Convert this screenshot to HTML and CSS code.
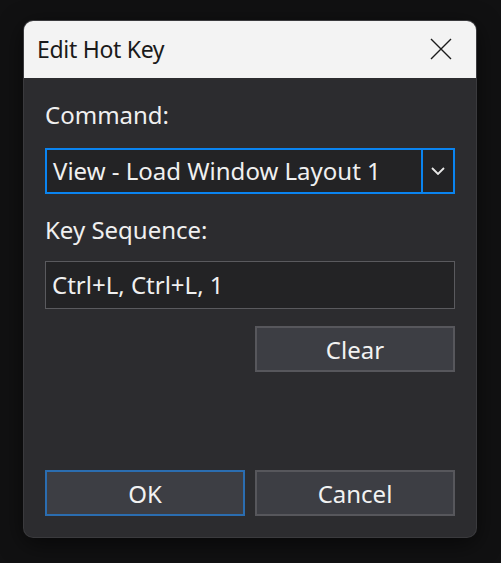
FILE: index.html
```html
<!DOCTYPE html>
<html>
<head>
<meta charset="utf-8">
<link rel="stylesheet" href="styles.css">
</head>
<body>
<div class="dialog">
  <div class="titlebar">
    <span class="title">Edit Hot Key</span>
    <button class="close" aria-label="Close">
      <svg width="22" height="22" viewBox="0 0 22 22"><path d="M1 1 L21 21 M21 1 L1 21" stroke="#1b1b1b" stroke-width="1.4" fill="none"/></svg>
    </button>
  </div>
  <div class="content">
    <div class="label label-cmd">Command:</div>
    <div class="combo">
      <div class="combo-text">View - Load Window Layout 1</div>
      <div class="combo-arrow">
        <svg width="14" height="8" viewBox="0 0 14 8"><path d="M1 1 L7 7 L13 1" stroke="#e8e8e8" stroke-width="1.8" fill="none"/></svg>
      </div>
    </div>
    <div class="label label-key">Key Sequence:</div>
    <div class="input">Ctrl+L, Ctrl+L, 1</div>
    <div class="clear-row"><button class="btn">Clear</button></div>
    <div class="spacer"></div>
    <div class="actions">
      <button class="btn btn-default">OK</button>
      <button class="btn">Cancel</button>
    </div>
  </div>
</div>
</body>
</html>
```

FILE: styles.css
```css
html, body {
  margin: 0;
  padding: 0;
}
body {
  background: #111112;
  width: 501px;
  height: 563px;
  padding: 21px 0 0 24px;
  box-sizing: border-box;
  font-family: "Noto Sans", "Open Sans", sans-serif;
}
.dialog {
  width: 452px;
  height: 516px;
  border-radius: 9px;
  background: #2c2c2f;
  box-shadow: 0 0 0 1px #3a3a3d, 0 6px 24px rgba(0,0,0,0.6);
  overflow: hidden;
  display: flex;
  flex-direction: column;
}
.titlebar {
  height: 57px;
  background: #f3f3f3;
  display: flex;
  align-items: center;
  justify-content: space-between;
  padding: 0 24px 0 13px;
  flex: none;
}
.title {
  font-family: "Noto Sans", sans-serif;
  font-size: 23px;
  color: #1a1a1a;
  letter-spacing: -0.3px;
  padding-bottom: 2px;
}
.close {
  background: none;
  border: 0;
  padding: 0;
  width: 22px;
  height: 22px;
  display: flex;
  margin-bottom: 2px;
}
.content {
  flex: 1;
  display: flex;
  flex-direction: column;
  padding: 21px 21px 21px 21px;
  color: #f0f0f0;
  font-size: 24px;
}
.label {
  line-height: 32px;
  height: 32px;
}
.label-cmd { margin-bottom: 17px; }
.label-key { margin-top: 20px; margin-bottom: 15px; }
.combo {
  height: 46px;
  box-sizing: border-box;
  border: 2px solid #0a84f0;
  background: #232325;
  display: flex;
}
.combo-text {
  flex: 1;
  padding-left: 6px;
  line-height: 42px;
  white-space: nowrap;
}
.combo-arrow {
  width: 30px;
  border-left: 2px solid #0a84f0;
  display: flex;
  align-items: center;
  justify-content: center;
}
.input {
  height: 48px;
  box-sizing: border-box;
  border: 1px solid #5a5a5e;
  background: #232325;
  padding-left: 6px;
  line-height: 46px;
}
.clear-row {
  display: flex;
  justify-content: flex-end;
  margin-top: 17px;
}
.btn {
  width: 200px;
  height: 46px;
  box-sizing: border-box;
  background: #3d3e44;
  border: 2px solid #57575c;
  color: #f2f2f2;
  font-family: "Noto Sans", "Open Sans", sans-serif;
  font-size: 24px;
  padding: 0;
}
.btn-default {
  border-color: #2b6db0;
}
.spacer { flex: 1; }
.actions {
  display: flex;
  justify-content: space-between;
}
```
